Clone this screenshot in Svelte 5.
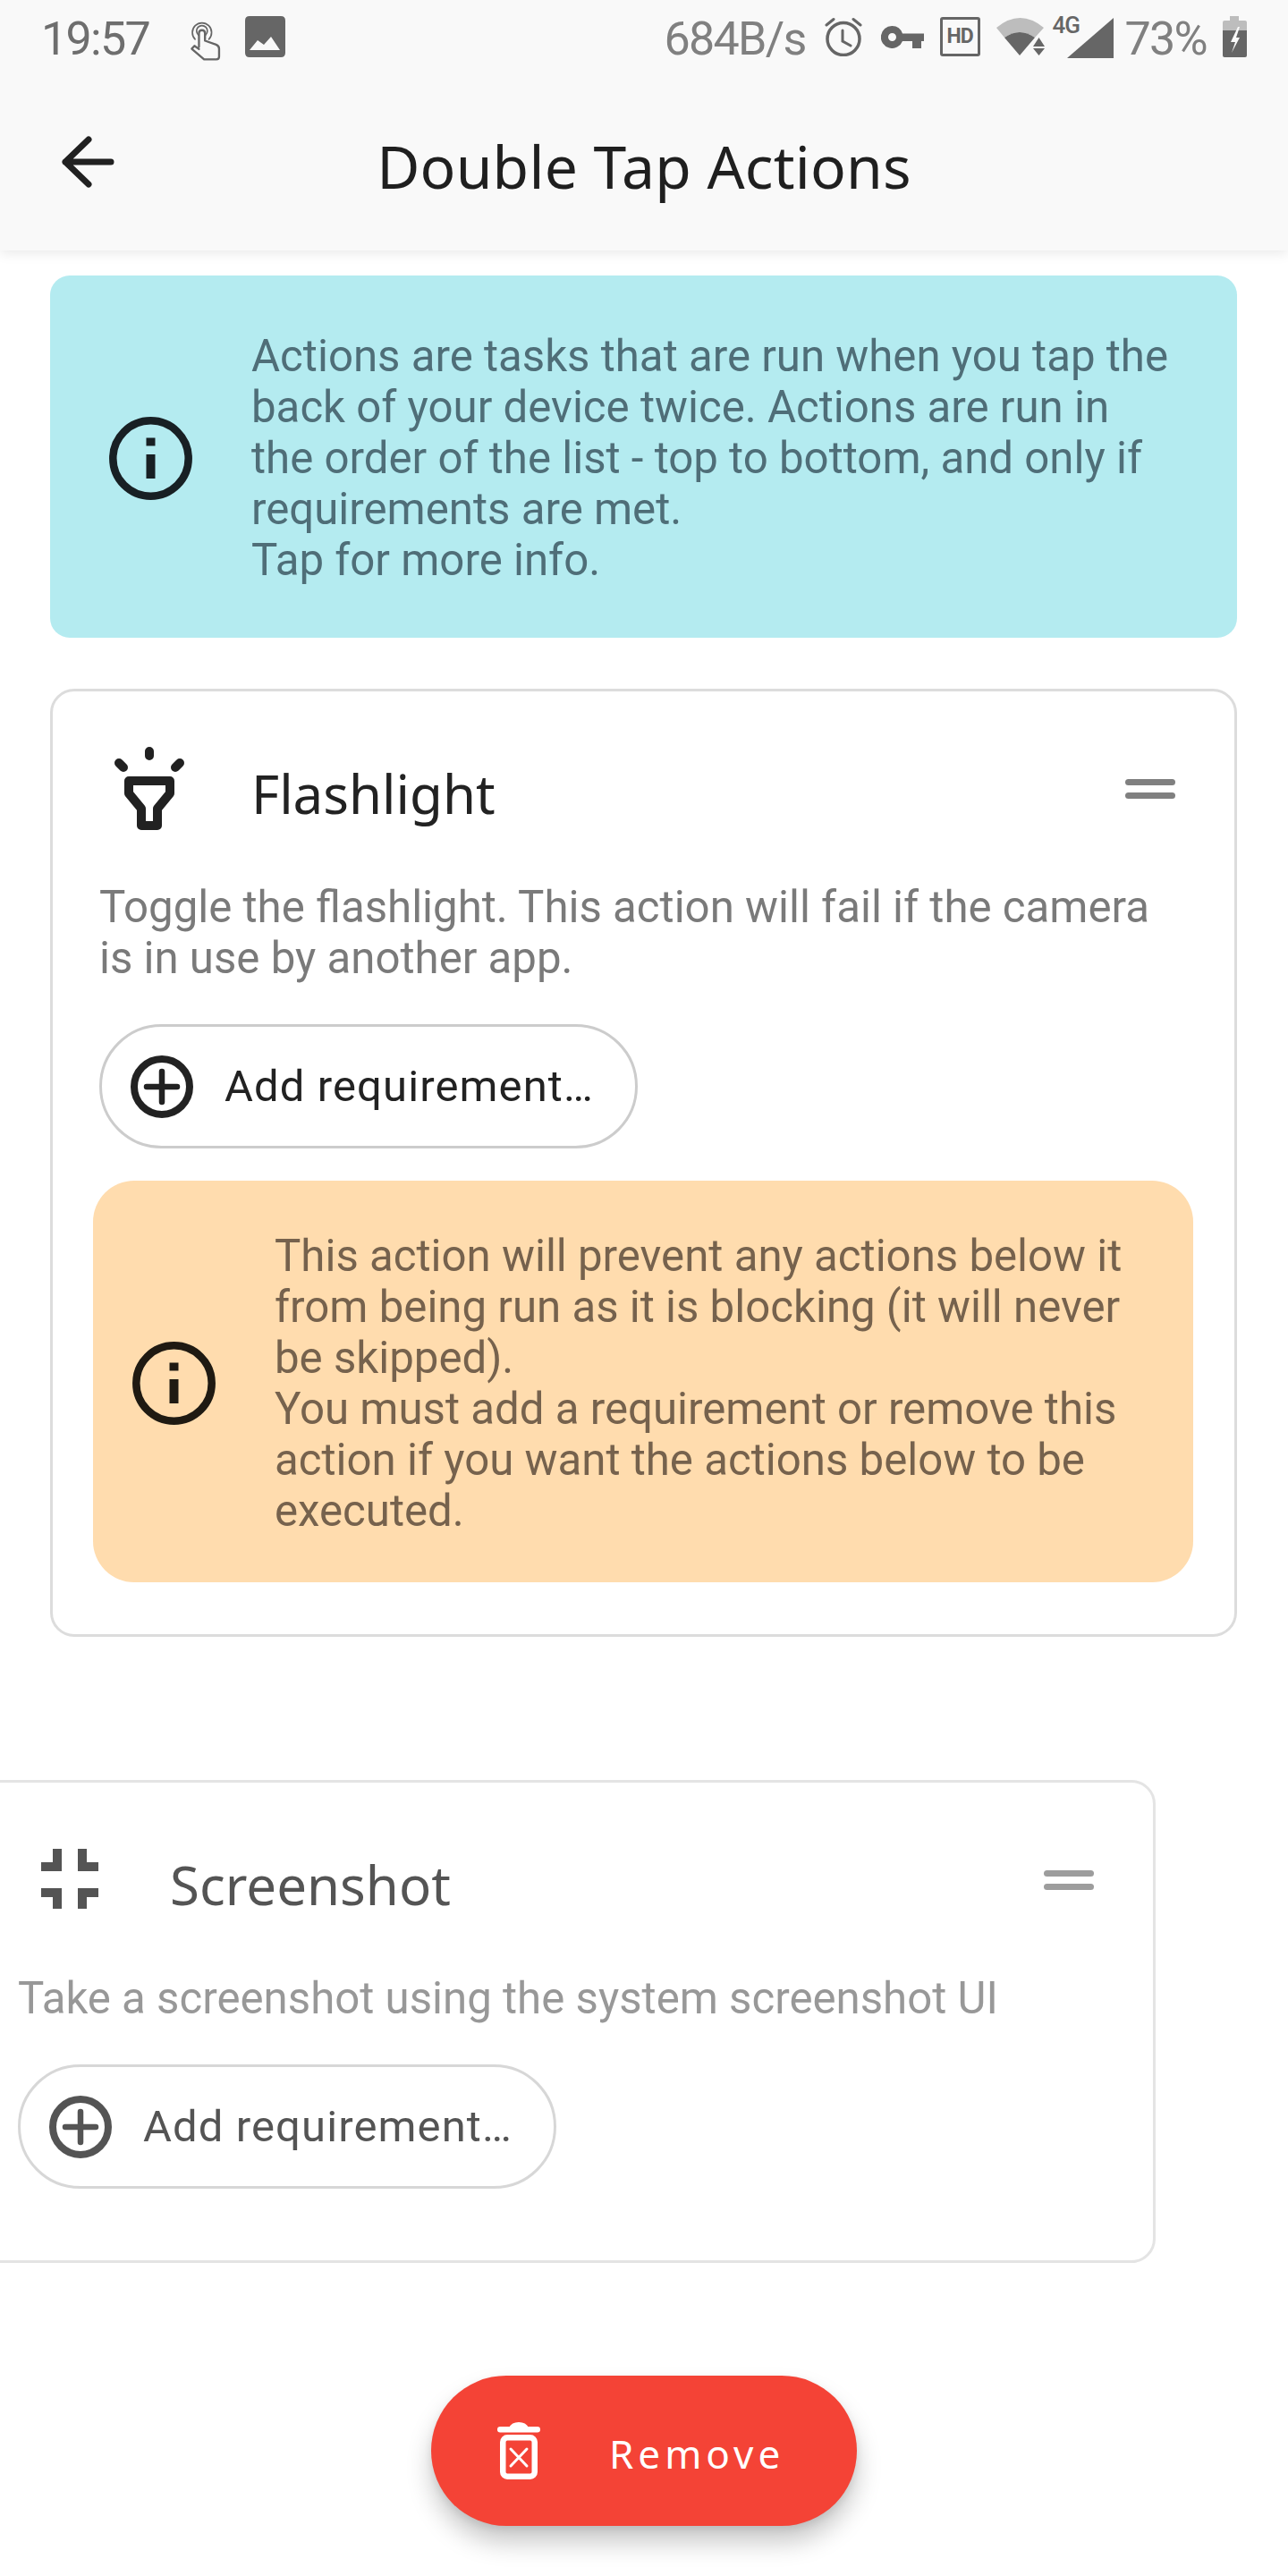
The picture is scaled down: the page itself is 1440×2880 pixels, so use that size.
<script>
	const infoPath = 'M46.5 4.3a42.2 42.2 0 1 0 0 84.4a42.2 42.2 0 1 0 0-84.4z'
</script>

{#snippet infoIcon()}
	<svg class="info-icon" viewBox="0 0 93 93" aria-hidden="true">
		<path d={infoPath} fill="none" stroke="currentColor" stroke-width="8.5" />
		<rect x="41.5" y="23.5" width="10" height="9" fill="currentColor" />
		<rect x="41.5" y="42" width="10" height="27" fill="currentColor" />
	</svg>
{/snippet}

{#snippet addButton()}
	<button type="button" class="add-req">
		<svg class="plus" viewBox="0 0 70 70" aria-hidden="true">
			<circle cx="35" cy="35" r="31" fill="none" stroke="currentColor" stroke-width="8" />
			<path d="M18 35h34M35 18v34" fill="none" stroke="currentColor" stroke-width="6.5" stroke-linecap="round" />
		</svg>
		<span>Add requirement…</span>
	</button>
{/snippet}

{#snippet handle()}
	<div class="handle" aria-hidden="true"><i></i><i></i></div>
{/snippet}

<div class="screen">
	<header class="appbar">
		<div class="status">
			<span class="time">19:57</span>
			<svg class="touch" viewBox="38 35 102 137" aria-hidden="true">
				<g fill="none" stroke="currentColor" stroke-linecap="round" stroke-linejoin="round">
					<path d="M55 100A32 32 0 1 1 101 100" stroke-width="5" />
					<path d="M66 86A18 18 0 1 1 90 86" stroke-width="5" />
					<path d="M68 125V80Q68 70 78 70T88 80V105L125 118Q135 122 135 132V158Q135 167 126 167H85L44 132L53 122L68 133" stroke-width="7" />
				</g>
			</svg>
			<svg class="picture" viewBox="0 0 45 46" aria-hidden="true">
				<path fill-rule="evenodd" d="M5 0H40Q45 0 45 5V41Q45 46 40 46H5Q0 46 0 41V5Q0 0 5 0ZM5 38H39L29 23L21 32L14 27Z" fill="currentColor" />
			</svg>
			<span class="speed">684B/s</span>
			<svg class="alarm" viewBox="0 0 42 44" aria-hidden="true">
				<g fill="none" stroke="currentColor" stroke-linecap="round" stroke-width="3.5">
					<circle cx="21" cy="24.5" r="18" />
					<path d="M20 15V27L29 32M2 9L10 2.5M32 2.5L40 9" stroke-width="3" />
				</g>
			</svg>
			<svg class="key" viewBox="0 0 48 25" aria-hidden="true">
				<path fill-rule="evenodd" d="M12.5 0A12.5 12.5 0 0 1 24 8.500H48V17H45V25H35V17H24A12.5 12.5 0 1 1 12.5 0ZM12.500 8A4.500 4.500 0 1 0 12.500 17A4.500 4.500 0 1 0 12.500 8Z" fill="currentColor" />
			</svg>
			<span class="hd">HD</span>
			<svg class="wifi" viewBox="0 0 54 43" aria-hidden="true">
				<path d="M0 11Q26.500-11 53 11L43 22Q26 10 9 22Z" fill="#bdbdbd" />
				<path d="M9 22Q26 10 43 22L26 42Z" fill="currentColor" />
				<path d="M47.500 22L54 32H41ZM41 34H54L47.500 42Z" fill="currentColor" />
			</svg>
			<div class="signal">
				<span class="net">4G</span>
				<svg viewBox="0 0 52 45" aria-hidden="true">
					<path d="M0 45H52V0Z" fill="currentColor" />
				</svg>
			</div>
			<span class="battery-text">73%</span>
			<svg class="battery" viewBox="0 0 27 46" aria-hidden="true">
				<path d="M8 0H18V5H25Q27 5 27 7V16H0V7Q0 5 2 5H8Z" fill="#bdbdbd" />
				<path d="M0 16H27V44Q27 46 25 46H2Q0 46 0 44Z" fill="currentColor" />
				<path d="M17 12L9 29H14L10 41L19 24H15L19 12Z" fill="#f9f9f9" />
			</svg>
		</div>
		<div class="toolbar">
			<button type="button" class="back" aria-label="Back">
				<svg viewBox="0 0 60 60" aria-hidden="true">
					<path d="M56 30H5M31 5L5 30L31 55" fill="none" stroke="currentColor" stroke-width="7" stroke-linecap="round" stroke-linejoin="round" />
				</svg>
			</button>
			<h1>Double Tap Actions</h1>
		</div>
	</header>

	<main class="content">
		<div class="notice blue">
			{@render infoIcon()}
			<p>Actions are tasks that are run when you tap the back of your device twice. Actions are run in the order of the list - top to bottom, and only if requirements are met.<br />Tap for more info.</p>
		</div>

		<section class="card">
			<div class="card-head">
				<svg class="action-icon" viewBox="0 0 120 120" aria-hidden="true">
					<path d="M35 53H81V67L67 84V103H49V84L35 67Z" fill="none" stroke="currentColor" stroke-width="10" stroke-linejoin="round" />
					<path d="M58 20V25M24 33L29 38M92 33L87 38" fill="none" stroke="currentColor" stroke-width="10" stroke-linecap="round" />
				</svg>
				<h2>Flashlight</h2>
				{@render handle()}
			</div>
			<p class="desc">Toggle the flashlight. This action will fail if the camera is in use by another app.</p>
			{@render addButton()}
			<div class="notice orange">
				{@render infoIcon()}
				<p>This action will prevent any actions below it from being run as it is blocking (it will never be skipped).<br />You must add a requirement or remove this action if you want the actions below to be executed.</p>
			</div>
		</section>

		<section class="card swiping">
			<div class="card-head">
				<svg class="action-icon" viewBox="0 0 120 120" aria-hidden="true">
					<path d="M41 27H51V52H28V42H41ZM69 27H79V42H92V52H69ZM28 71H51V94H41V81H28ZM69 71H92V81H79V94H69Z" fill="currentColor" />
				</svg>
				<h2>Screenshot</h2>
				{@render handle()}
			</div>
			<p class="desc">Take a screenshot using the system screenshot UI</p>
			{@render addButton()}
		</section>
	</main>

	<button type="button" class="remove">
		<svg viewBox="0 0 48 64" aria-hidden="true">
			<rect x="0" y="5" width="48" height="6.500" rx="3.200" fill="currentColor" />
			<path d="M13 6Q16 0 24 0T35 6Z" fill="currentColor" />
			<rect x="6.250" y="17.250" width="35.500" height="43.500" rx="5" fill="none" stroke="currentColor" stroke-width="6.500" />
			<path d="M15 30L33 49M33 30L15 49" fill="none" stroke="currentColor" stroke-width="3" stroke-linecap="round" />
		</svg>
		<span>Remove</span>
	</button>
</div>

<style>
	:global(body) {
		margin: 0;
		background: #fff;
	}

	.screen {
		position: relative;
		width: 1440px;
		height: 2880px;
		overflow: hidden;
		background: #fff;
		font-family: Roboto, sans-serif;
	}

	button {
		font: inherit;
		background: none;
		border: none;
		padding: 0;
		color: inherit;
	}

	.appbar {
		position: relative;
		z-index: 1;
		height: 280px;
		background: #f9f9f9;
		box-shadow: 0 2px 14px rgba(0, 0, 0, 0.1);
	}

	/* status bar */
	.status {
		display: flex;
		align-items: center;
		height: 82px;
		padding: 0 46px;
		color: #666;
	}

	.status svg {
		flex-shrink: 0;
		display: block;
	}

	.time,
	.speed,
	.battery-text {
		margin-top: 5px;
		font-size: 52px;
		letter-spacing: -1.7px;
		line-height: 82px;
		white-space: nowrap;
	}

	.time {
		color: #6e6e6e;
	}

	.speed,
	.battery-text {
		color: #808080;
	}

	.touch {
		width: 35px;
		height: 46px;
		margin: 8px 0 0 45px;
	}

	.picture {
		width: 45px;
		height: 46px;
		margin-left: 27px;
	}

	.speed {
		margin-left: auto;
	}

	.alarm {
		width: 42px;
		height: 44px;
		margin-left: 21px;
	}

	.key {
		width: 48px;
		height: 25px;
		margin-left: 21px;
	}

	.hd {
		box-sizing: border-box;
		width: 45px;
		height: 44px;
		margin-left: 18px;
		border: 3px solid currentColor;
		border-radius: 3px;
		font-size: 23px;
		font-weight: 700;
		line-height: 38px;
		text-align: center;
		letter-spacing: -1px;
	}

	.wifi {
		width: 54px;
		height: 43px;
		margin-left: 18px;
	}

	.signal {
		position: relative;
		display: flex;
		justify-content: flex-end;
		width: 68px;
		height: 47px;
		margin-left: 9px;
	}

	.signal svg {
		width: 52px;
		height: 45px;
		margin-top: 2px;
	}

	.net {
		position: absolute;
		left: 0;
		top: -2px;
		font-size: 26px;
		font-weight: 500;
		line-height: 24px;
		letter-spacing: -1px;
	}

	.battery-text {
		margin-left: 13px;
	}

	.battery {
		width: 27px;
		height: 46px;
		margin-left: 18px;
	}

	/* toolbar */
	.toolbar {
		display: flex;
		align-items: center;
		height: 198px;
		padding: 0 68px;
	}

	.back {
		flex: 0 0 60px;
		height: 60px;
		color: #212121;
	}

	.back svg {
		display: block;
		width: 60px;
		height: 60px;
	}

	h1 {
		flex: 1;
		margin: 8px 60px 0 0;
		font-family: 'Noto Sans', sans-serif;
		font-size: 66px;
		font-weight: 400;
		letter-spacing: 0.2px;
		line-height: 90px;
		text-align: center;
		color: #1f1f1f;
	}

	/* content */
	.content {
		padding: 28px 57px 0 56px;
	}

	.notice {
		display: flex;
		align-items: center;
		gap: 66px;
	}

	.notice p {
		margin: 0;
		font-size: 49.2px;
		line-height: 57px;
	}

	.info-icon {
		flex: 0 0 93px;
		width: 93px;
		height: 93px;
		color: #182024;
	}

	.blue {
		box-sizing: border-box;
		height: 405px;
		padding: 4px 70px 0 66px;
		border-radius: 22px;
		background: #b4ebf0;
	}

	.blue p {
		color: #4f6e78;
	}

	.orange {
		box-sizing: border-box;
		width: 1230px;
		height: 449px;
		margin: 36px 0 0 -7px;
		padding: 4px 40px 0 44px;
		border-radius: 46px;
		background: #ffdcae;
	}

	.orange p {
		color: #76624d;
	}

	.orange .info-icon {
		color: #1f1a12;
	}

	.card {
		box-sizing: border-box;
		margin-top: 57px;
		padding: 47px 45px 58px 52px;
		border: 3px solid #dcdcdc;
		border-radius: 27px;
		background: #fff;
	}

	.swiping {
		margin-top: 160px;
		padding-bottom: 80px;
		opacity: 0.77;
		transform: translateX(-91px);
	}

	.card-head {
		display: flex;
		align-items: center;
		height: 120px;
		margin-left: -2px;
	}

	.action-icon {
		flex: 0 0 120px;
		width: 120px;
		height: 120px;
		color: #212121;
	}

	h2 {
		margin: 14px 0 0 52px;
		font-family: 'Noto Sans', sans-serif;
		font-size: 60px;
		font-weight: 400;
		line-height: 80px;
		color: #222;
	}

	.handle {
		display: flex;
		flex-direction: column;
		gap: 8px;
		width: 56px;
		margin: 3px 21px 0 auto;
	}

	.handle i {
		display: block;
		height: 7px;
		border-radius: 4px;
		background: #808080;
	}

	.desc {
		max-width: 1195px;
		margin: 46px 0 0;
		font-size: 49.2px;
		line-height: 57px;
		color: #7a7a7a;
	}

	.add-req {
		box-sizing: border-box;
		display: flex;
		align-items: center;
		gap: 35px;
		width: 602px;
		height: 139px;
		margin-top: 45px;
		padding-left: 32px;
		border: 3px solid #ccc;
		border-radius: 70px;
		font-size: 49px;
		letter-spacing: 1.1px;
		color: #222;
		white-space: nowrap;
	}

	.plus {
		flex: 0 0 70px;
		width: 70px;
		height: 70px;
	}

	/* floating button */
	.remove {
		position: absolute;
		left: 482px;
		top: 2656px;
		display: flex;
		align-items: center;
		gap: 77px;
		box-sizing: border-box;
		width: 476px;
		height: 168px;
		padding-left: 74px;
		border-radius: 84px;
		background: #f44336;
		box-shadow:
			0 18px 28px rgba(0, 0, 0, 0.22),
			0 4px 8px rgba(0, 0, 0, 0.08);
		color: #fff;
		font-family: 'Noto Sans', sans-serif;
		font-size: 44px;
		letter-spacing: 5px;
	}

	.remove svg {
		flex: 0 0 48px;
		width: 48px;
		height: 64px;
	}

	.remove span {
		margin-top: 5px;
	}
</style>
